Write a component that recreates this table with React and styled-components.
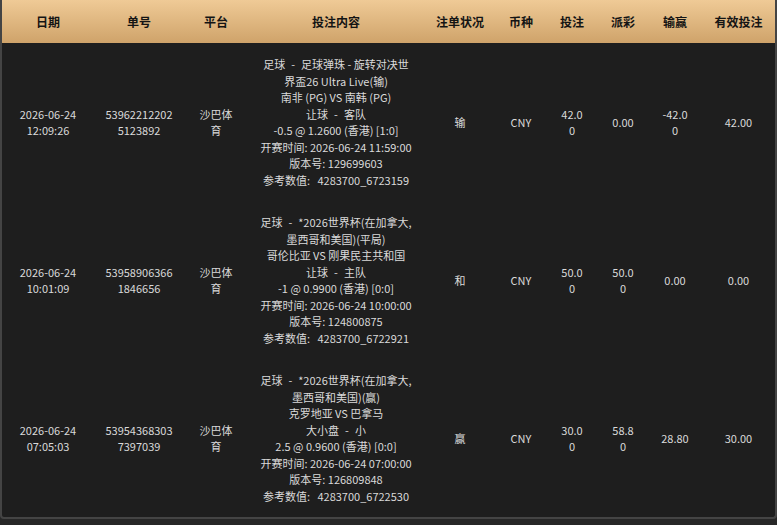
import styled, { createGlobalStyle } from "styled-components";

const GlobalStyle = createGlobalStyle`
    html, body {
        margin: 0;
        padding: 0;
        background: #272727;
    }
    body {
        font-family: "Noto Sans CJK SC", "Noto Sans", sans-serif;
    }
`

const Wrapper = styled.div`
    width: 777px;
    box-sizing: border-box;
    border: 2px solid #444444;
    border-top: none;
    border-radius: 0 0 4px 4px;
    background: #1e1e1e;
    overflow: hidden;
`

const Table = styled.table`
    width: 100%;
    table-layout: fixed;
    border-collapse: collapse;
`

const HeadRow = styled.tr`
    height: 43px;
    background: linear-gradient(to bottom, #efca96, #cfa36a);
`

const Th = styled.th`
    width: ${p => p.$w}px;
    padding: 0;
    font-size: 12px;
    font-weight: bold;
    color: #141414;
    text-align: center;
    vertical-align: middle;
`

const Td = styled.td`
    padding: 13px ${p => p.$pad}px;
    font-size: 11px;
    line-height: 16.5px;
    color: #dadada;
    text-align: center;
    vertical-align: middle;
    overflow-wrap: anywhere;
`

const Line = styled.div`
    white-space: normal;
`

const Sep = styled.span`
    padding: 0 6px;
`

const columns = [
    { key: "date", title: "日期", w: 92, pad: 11 },
    { key: "no", title: "单号", w: 90, pad: 11 },
    { key: "platform", title: "平台", w: 64, pad: 11 },
    { key: "content", title: "投注内容", w: 176, pad: 11 },
    { key: "status", title: "注单状况", w: 72, pad: 11 },
    { key: "currency", title: "币种", w: 50, pad: 8 },
    { key: "bet", title: "投注", w: 52, pad: 13 },
    { key: "payout", title: "派彩", w: 50, pad: 12 },
    { key: "win", title: "输赢", w: 54, pad: 12 },
    { key: "valid", title: "有效投注", w: 73, pad: 11 },
]

const rows = [
    {
        date: "2026-06-24 12:09:26",
        no: "539622122025123892",
        platform: "沙巴体育",
        sport: "足球",
        league: "足球弹珠 - 旋转对决世界盃26 Ultra Live(输)",
        match: "南非 (PG) VS 南韩 (PG)",
        market: "让球",
        pick: "客队",
        odds: "-0.5 @ 1.2600 (香港) [1:0]",
        start: "2026-06-24 11:59:00",
        version: "129699603",
        ref: "4283700_6723159",
        status: "输",
        currency: "CNY",
        bet: "42.00",
        payout: "0.00",
        win: "-42.00",
        valid: "42.00",
    },
    {
        date: "2026-06-24 10:01:09",
        no: "539589063661846656",
        platform: "沙巴体育",
        sport: "足球",
        league: "*2026世界杯(在加拿大,墨西哥和美国)(平局)",
        match: "哥伦比亚 VS 刚果民主共和国",
        market: "让球",
        pick: "主队",
        odds: "-1 @ 0.9900 (香港) [0:0]",
        start: "2026-06-24 10:00:00",
        version: "124800875",
        ref: "4283700_6722921",
        status: "和",
        currency: "CNY",
        bet: "50.00",
        payout: "50.00",
        win: "0.00",
        valid: "0.00",
    },
    {
        date: "2026-06-24 07:05:03",
        no: "539543683037397039",
        platform: "沙巴体育",
        sport: "足球",
        league: "*2026世界杯(在加拿大,墨西哥和美国)(赢)",
        match: "克罗地亚 VS 巴拿马",
        market: "大小盘",
        pick: "小",
        odds: "2.5 @ 0.9600 (香港) [0:0]",
        start: "2026-06-24 07:00:00",
        version: "126809848",
        ref: "4283700_6722530",
        status: "赢",
        currency: "CNY",
        bet: "30.00",
        payout: "58.80",
        win: "28.80",
        valid: "30.00",
    },
]

const BetContent = ({ row }) => <>
    <Line>{row.sport}<Sep>-</Sep>{row.league}</Line>
    <Line>{row.match}</Line>
    <Line>{row.market}<Sep>-</Sep>{row.pick}</Line>
    <Line>{row.odds}</Line>
    <Line>开赛时间: {row.start}</Line>
    <Line>版本号: {row.version}</Line>
    <Line>参考数值:{"\u00a0\u00a0 "}{row.ref}</Line>
</>

const App = () => {
    return <>
        <GlobalStyle />
        <Wrapper>
            <Table>
                <thead>
                    <HeadRow>
                        {columns.map(c => <Th key={c.key} $w={c.w}>{c.title}</Th>)}
                    </HeadRow>
                </thead>
                <tbody>
                    {rows.map(row => (
                        <tr key={row.no}>
                            {columns.map(c => (
                                <Td key={c.key} $pad={c.pad}>
                                    {c.key === "content" ? <BetContent row={row} /> : row[c.key]}
                                </Td>
                            ))}
                        </tr>
                    ))}
                </tbody>
            </Table>
        </Wrapper>
    </>
}

export default App;
